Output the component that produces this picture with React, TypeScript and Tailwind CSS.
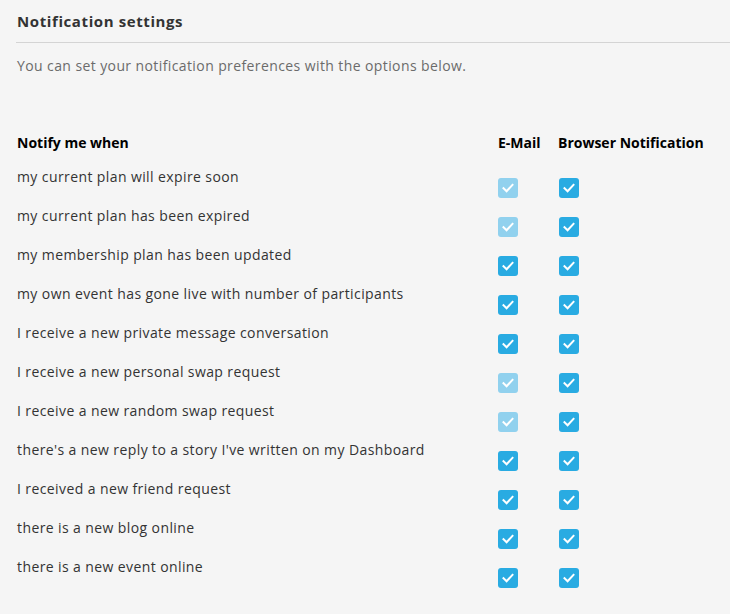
import React from "react";

const rows: [string, boolean, boolean][] = [
  ["my current plan will expire soon", false, true],
  ["my current plan has been expired", false, true],
  ["my membership plan has been updated", true, true],
  ["my own event has gone live with number of participants", true, true],
  ["I receive a new private message conversation", true, true],
  ["I receive a new personal swap request", false, true],
  ["I receive a new random swap request", false, true],
  ["there's a new reply to a story I've written on my Dashboard", true, true],
  ["I received a new friend request", true, true],
  ["there is a new blog online", true, true],
  ["there is a new event online", true, true],
];

function Box({ active }: { active: boolean }) {
  return (
    <div
      className={
        "w-5 h-5 rounded-[3px] flex items-center justify-center " +
        (active ? "bg-[#29abe2]" : "bg-[#91d1ee]")
      }
    >
      <svg width="12" height="10" viewBox="0 0 12 10" fill="none">
        <path d="M1.5 5.2 L4.6 8.2 L10.5 1.8" stroke="white" strokeWidth="2" strokeLinecap="square" />
      </svg>
    </div>
  );
}

export default function App() {
  return (
    <div className="w-[730px] h-[614px] bg-[#f5f5f5] pl-4 font-['Open_Sans',sans-serif] overflow-hidden">
      <div className="h-[43px] border-b border-[#d4d4d4] flex items-center pl-px pt-[1px]">
        <h1 className="text-[15px] font-bold text-[#333] tracking-[0.6px]">Notification settings</h1>
      </div>
      <p className="mt-[13px] pl-px text-[14px] leading-[20px] text-[#6b6b6b] tracking-[0.4px]">
        You can set your notification preferences with the options below.
      </p>
      <div className="mt-[56px] flex items-center h-[20px] text-[14px] font-bold text-black">
        <div className="w-[482px] pl-px">Notify me when</div>
        <div className="w-[60px]">E-Mail</div>
        <div>Browser Notification</div>
      </div>
      <div className="mt-[15px]">
        {rows.map(([label, e, b], i) => (
          <div key={i} className="flex h-[39px]">
            <div className="w-[482px] pl-px text-[14px] leading-[20px] text-[#333] tracking-[0.4px]">{label}</div>
            <div className="w-[61px] pt-[11px]">
              <Box active={e} />
            </div>
            <div className="pt-[11px]">
              <Box active={b} />
            </div>
          </div>
        ))}
      </div>
    </div>
  );
}
